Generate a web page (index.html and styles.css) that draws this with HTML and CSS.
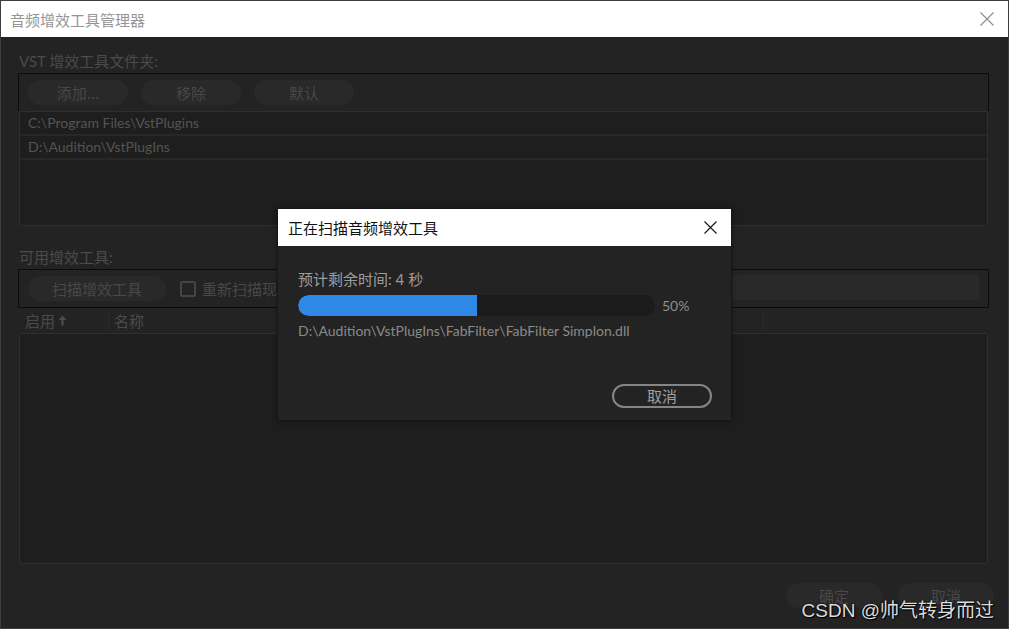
FILE: index.html
```html
<!DOCTYPE html>
<html lang="zh-CN">
<head>
<meta charset="utf-8">
<title>音频增效工具管理器</title>
<link rel="stylesheet" href="styles.css">
</head>
<body>
<div class="window">
  <div class="titlebar">
    <span class="title">音频增效工具管理器</span>
    <svg class="win-close" width="14" height="14" viewBox="0 0 14 14"><path d="M0.5 0.5 L13.5 13.5 M13.5 0.5 L0.5 13.5" stroke="#8c8c8c" stroke-width="1.1" fill="none"/></svg>
  </div>
  <div class="content">
    <div class="section-label">VST 增效工具文件夹:</div>
    <div class="toolbar toolbar-open">
      <span class="pill">添加...</span>
      <span class="pill">移除</span>
      <span class="pill">默认</span>
    </div>
    <div class="list list-folders">
      <div class="row">C:\Program Files\VstPlugins</div>
      <div class="row">D:\Audition\VstPlugIns</div>
    </div>
    <div class="section-label label-second">可用增效工具:</div>
    <div class="toolbar">
      <span class="pill pill-wide">扫描增效工具</span>
      <span class="check"><span class="box"></span><span class="check-text">重新扫描现有增效工具</span></span>
      <span class="search"></span>
    </div>
    <div class="header-row">
      <span class="col col-enable">启用<svg class="arrow" width="9" height="11" viewBox="0 0 9 11"><path d="M4.5 0.5 L8.5 5 L5.6 5 L5.6 10.5 L3.4 10.5 L3.4 5 L0.5 5 Z" fill="#4c4c4c"/></svg></span>
      <span class="col col-name">名称</span>
      <span class="col col-rest"></span>
    </div>
    <div class="list list-plugins"></div>
    <div class="footer">
      <span class="pill pill-foot">确定</span>
      <span class="pill pill-foot">取消</span>
    </div>
  </div>

  <div class="dialog">
    <div class="dlg-titlebar">
      <span class="dlg-title">正在扫描音频增效工具</span>
      <svg class="dlg-close" width="13" height="13" viewBox="0 0 13 13"><path d="M0.5 0.5 L12.5 12.5 M12.5 0.5 L0.5 12.5" stroke="#1a1a1a" stroke-width="1.2" fill="none"/></svg>
    </div>
    <div class="dlg-body">
      <div class="dlg-eta">预计剩余时间: 4 秒</div>
      <div class="progress-line">
        <div class="track"><div class="fill" style="width:50%"></div></div>
        <span class="pct">50%</span>
      </div>
      <div class="dlg-path">D:\Audition\VstPlugIns\FabFilter\FabFilter Simplon.dll</div>
      <div class="dlg-actions"><span class="btn-outline">取消</span></div>
    </div>
  </div>

  <div class="watermark">CSDN @帅气转身而过</div>
</div>
</body>
</html>
```

FILE: styles.css
```css
* { box-sizing: border-box; }
html, body { margin: 0; padding: 0; background: #232323; }
body {
  font-family: "Lato", "Noto Sans CJK SC", sans-serif;
  width: 1009px;
  height: 629px;
  overflow: hidden;
}
.window {
  position: relative;
  width: 1009px;
  height: 629px;
  border: 1px solid #3e3e3e;
  background: #232323;
  display: flex;
  flex-direction: column;
}
.titlebar {
  height: 36px;
  background: #ffffff;
  display: flex;
  align-items: center;
  justify-content: space-between;
  padding: 0 14px 0 9px;
  flex: 0 0 auto;
}
.title {
  font-family: "Noto Sans CJK SC", sans-serif;
  font-size: 15px;
  color: #959595;
}
.win-close { display: block; }

.content {
  flex: 1;
  padding: 13px 19px 0 17px;
  display: flex;
  flex-direction: column;
}
.section-label {
  font-family: "Lato", "Noto Sans CJK SC", sans-serif;
  font-size: 15px;
  line-height: 22px;
  height: 22px;
  color: #4b4b4b;
  margin-bottom: 1px;
  padding-left: 1px;
}
.label-second { margin-top: 20px; }

.toolbar {
  height: 39px;
  border: 1px solid #0c0c0c;
  padding: 6px 9px 0 9px;
  display: flex;
  align-items: flex-start;
  gap: 13px;
}
.toolbar-open {
  height: 38px;
  border-bottom: none;
}
.pill {
  width: 100px;
  height: 25px;
  border-radius: 13px;
  background: #292929;
  color: #484848;
  font-family: "Noto Sans CJK SC", sans-serif;
  font-size: 15px;
  line-height: 25px;
  text-align: center;
  flex: 0 0 auto;
}
.pill-wide { width: 138px; }
.check {
  display: flex;
  align-items: center;
  height: 25px;
  font-family: "Noto Sans CJK SC", sans-serif;
  font-size: 15px;
  color: #484848;
  margin-left: 1px;
  gap: 6px;
}
.check-text {
  display: block;
  width: 76px;
  overflow: hidden;
  white-space: nowrap;
}
.box {
  width: 16px;
  height: 16px;
  border: 2px solid #454545;
  border-radius: 2px;
}
.search {
  margin-left: auto;
  width: 300px;
  height: 25px;
  margin-top: -1px;
  background: #292929;
}

.list {
  margin: 0 1px;
  background: #1e1e1e;
  border: 1px solid #2f2f2f;
  border-radius: 2px;
}
.list-folders { height: 115px; }
.row {
  height: 24px;
  border-bottom: 2px solid #282828;
  padding-left: 8px;
  font-size: 14px;
  line-height: 22px;
  color: #545454;
}
.header-row {
  height: 25px;
  display: flex;
  align-items: center;
  font-family: "Noto Sans CJK SC", sans-serif;
  font-size: 15px;
  color: #4b4b4b;
}
.col { display: flex; align-items: center; height: 17px; line-height: 17px; }
.col-enable { width: 91px; padding-left: 7px; border-right: 1px solid #2b2b2b; gap: 3px; }
.col-name { width: 655px; padding-left: 5px; border-right: 1px solid #2b2b2b; }
.arrow { display: block; }
.list-plugins { height: 231px; }

.footer {
  display: flex;
  justify-content: flex-end;
  gap: 16px;
  margin-top: 19px;
  margin-right: -5px;
}
.pill-foot { width: 96px; }

.dialog {
  position: absolute;
  left: 276px;
  top: 207px;
  width: 455px;
  height: 213px;
  border: 1px solid #161616;
  background: #232323;
  box-shadow: 0 0 6px rgba(0,0,0,0.35);
  display: flex;
  flex-direction: column;
}
.dlg-titlebar {
  height: 37px;
  background: #ffffff;
  display: flex;
  align-items: center;
  justify-content: space-between;
  padding: 0 14px 0 10px;
}
.dlg-title {
  font-family: "Noto Sans CJK SC", sans-serif;
  font-size: 15px;
  color: #111111;
}
.dlg-close { display: block; }
.dlg-body {
  flex: 1;
  padding: 22px 19px 12px 20px;
  display: flex;
  flex-direction: column;
}
.dlg-eta {
  font-size: 15px;
  line-height: 22px;
  height: 22px;
  color: #9c9c9c;
}
.progress-line {
  margin-top: 5px;
  display: flex;
  align-items: center;
  gap: 7px;
}
.track {
  width: 357px;
  height: 21px;
  border-radius: 11px;
  background: #1b1b1b;
  overflow: hidden;
}
.fill {
  height: 100%;
  background: #2d89e5;
  border-radius: 11px 0 0 11px;
}
.pct {
  font-size: 14px;
  color: #8e8e8e;
}
.dlg-path {
  margin-top: 4px;
  font-size: 14px;
  line-height: 22px;
  color: #8a8a8a;
}
.dlg-actions {
  margin-top: auto;
  display: flex;
  justify-content: flex-end;
}
.btn-outline {
  width: 100px;
  height: 24px;
  border: 2px solid #858585;
  border-radius: 12px;
  font-family: "Noto Sans CJK SC", sans-serif;
  font-size: 15px;
  line-height: 20px;
  text-align: center;
  color: #a0a0a0;
}

.watermark {
  position: absolute;
  right: 14px;
  bottom: 6px;
  font-family: "Liberation Sans", "Noto Sans CJK SC", sans-serif;
  font-size: 19px;
  color: #dcdcdc;
  text-shadow: 1px 1px 1px #000, 0 0 2px #000;
}
```
